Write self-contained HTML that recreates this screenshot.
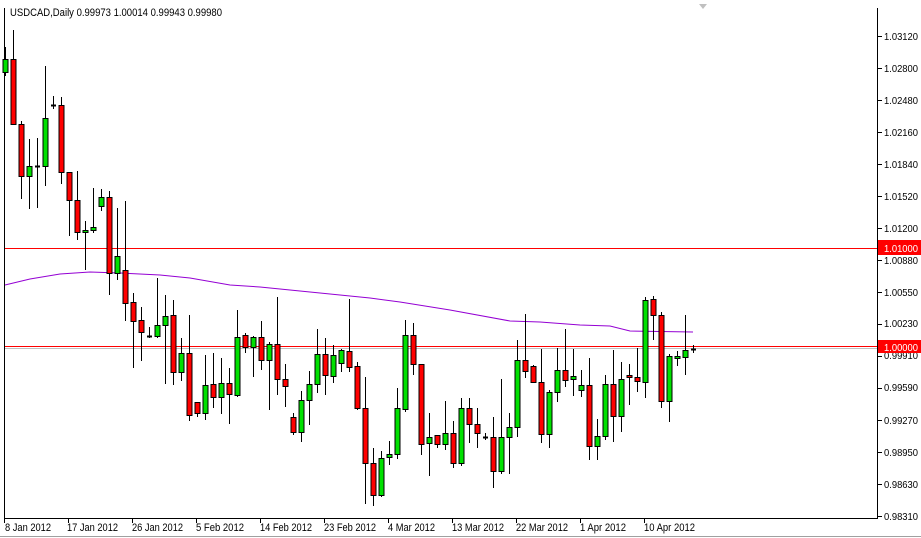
<!DOCTYPE html>
<html><head><meta charset="utf-8"><style>
html,body{margin:0;padding:0;background:#fff;width:921px;height:538px;overflow:hidden}
svg{display:block;font-family:"Liberation Sans",sans-serif;font-size:11px}
</style></head><body>
<svg id="c" width="921" height="538" xmlns="http://www.w3.org/2000/svg">
<rect x="0" y="0" width="921" height="538" fill="#fff"/>
<line x1="0" y1="536.5" x2="921" y2="536.5" stroke="#a0a0a0"/>
<line x1="4.5" y1="8" x2="4.5" y2="518" stroke="#000"/>
<line x1="877.5" y1="8" x2="877.5" y2="518" stroke="#000"/>
<line x1="4" y1="518.5" x2="878" y2="518.5" stroke="#000"/>
<polygon points="699,4 707,4 703,9" fill="#c0c0c0"/>
<line x1="5" y1="248.5" x2="877" y2="248.5" stroke="#ff0000"/>
<line x1="5" y1="348.5" x2="877" y2="348.5" stroke="#c0c0c0"/>
<line x1="5" y1="346.5" x2="877" y2="346.5" stroke="#ff0000"/>
<polyline fill="none" stroke="#9400d3" stroke-width="1" points="5,285 30,279 60,274 90,272 120,273 160,275 190,278 230,285 260,287 290,290 340,295 370,298 400,302 450,310 510,321 540,322 580,325 610,326 630,331 693,332"/>
<g id="cd"></g>
<text x="10" y="16" fill="#000" textLength="212" lengthAdjust="spacingAndGlyphs">USDCAD,Daily  0.99973 1.00014 0.99943 0.99980</text>
<g fill="#000" font-size="10.5">
<text x="884" y="40" textLength="34" lengthAdjust="spacingAndGlyphs">1.03120</text><text x="884" y="72" textLength="34" lengthAdjust="spacingAndGlyphs">1.02800</text>
<text x="884" y="104" textLength="34" lengthAdjust="spacingAndGlyphs">1.02480</text><text x="884" y="136" textLength="34" lengthAdjust="spacingAndGlyphs">1.02160</text>
<text x="884" y="168" textLength="34" lengthAdjust="spacingAndGlyphs">1.01840</text><text x="884" y="200" textLength="34" lengthAdjust="spacingAndGlyphs">1.01520</text>
<text x="884" y="232" textLength="34" lengthAdjust="spacingAndGlyphs">1.01200</text><text x="884" y="264" textLength="34" lengthAdjust="spacingAndGlyphs">1.00880</text>
<text x="884" y="296" textLength="34" lengthAdjust="spacingAndGlyphs">1.00550</text><text x="884" y="327" textLength="34" lengthAdjust="spacingAndGlyphs">1.00230</text>
<text x="884" y="359" textLength="34" lengthAdjust="spacingAndGlyphs">0.99910</text><text x="884" y="391" textLength="34" lengthAdjust="spacingAndGlyphs">0.99590</text>
<text x="884" y="424" textLength="34" lengthAdjust="spacingAndGlyphs">0.99270</text><text x="884" y="456" textLength="34" lengthAdjust="spacingAndGlyphs">0.98950</text>
<text x="884" y="488" textLength="34" lengthAdjust="spacingAndGlyphs">0.98630</text><text x="884" y="520" textLength="34" lengthAdjust="spacingAndGlyphs">0.98310</text>
</g>
<rect x="878" y="240" width="43" height="15" fill="#ff0000"/>
<text x="884" y="252" fill="#fff" font-size="10.5" textLength="34" lengthAdjust="spacingAndGlyphs">1.01000</text>
<rect x="878" y="340" width="43" height="13" fill="#ff0000"/>
<text x="884" y="351" fill="#fff" font-size="10.5" textLength="34" lengthAdjust="spacingAndGlyphs">1.00000</text>
<g id="tk" stroke="#000"></g>
<g fill="#000">
<text x="5" y="531" textLength="46" lengthAdjust="spacingAndGlyphs">8 Jan 2012</text><text x="67" y="531" textLength="51" lengthAdjust="spacingAndGlyphs">17 Jan 2012</text>
<text x="132" y="531" textLength="51" lengthAdjust="spacingAndGlyphs">26 Jan 2012</text><text x="196" y="531" textLength="48" lengthAdjust="spacingAndGlyphs">5 Feb 2012</text>
<text x="260" y="531" textLength="52" lengthAdjust="spacingAndGlyphs">14 Feb 2012</text><text x="324" y="531" textLength="52" lengthAdjust="spacingAndGlyphs">23 Feb 2012</text>
<text x="388" y="531" textLength="47" lengthAdjust="spacingAndGlyphs">4 Mar 2012</text><text x="452" y="531" textLength="52" lengthAdjust="spacingAndGlyphs">13 Mar 2012</text>
<text x="516" y="531" textLength="52" lengthAdjust="spacingAndGlyphs">22 Mar 2012</text><text x="580" y="531" textLength="46" lengthAdjust="spacingAndGlyphs">1 Apr 2012</text>
<text x="644" y="531" textLength="51" lengthAdjust="spacingAndGlyphs">10 Apr 2012</text>
</g>
</svg>
<script>
var d=[[72,47,76,59],[59,30,124,124],[124,121,199,176],[176,139,209,166],[166,138,208,166],[166,66,186,118],[105,96,109,105],[105,97,184,172],[172,172,236,200],[200,171,240,232],[232,221,270,230],[230,188,233,227],[206,189,211,197],[197,191,295,273],[273,208,280,256],[270,201,321,303],[302,293,368,321],[320,307,361,332],[336,327,338,336],[336,278,338,325],[325,295,384,316],[315,300,385,372],[372,338,381,353],[353,315,421,415],[402,402,417,413],[413,355,420,385],[384,353,408,397],[397,358,414,383],[383,368,424,394],[395,310,397,337],[335,333,353,347],[347,336,377,337],[337,321,370,360],[360,342,410,344],[344,297,395,379],[379,364,407,386],[417,413,435,432],[432,391,442,400],[400,371,425,384],[384,329,393,354],[354,338,395,375],[376,345,383,355],[363,349,372,350],[351,299,372,367],[366,362,410,408],[408,377,504,463],[463,448,506,495],[495,451,497,458],[457,441,465,454],[454,388,459,408],[409,320,412,335],[335,323,375,364],[364,364,455,444],[443,413,476,437],[435,435,448,444],[444,401,450,433],[433,421,468,463],[463,398,466,408],[408,398,443,424],[424,408,448,433],[437,433,440,437],[437,417,488,471],[471,379,474,437],[437,413,474,427],[427,340,437,360],[360,314,378,371],[366,365,383,382],[382,349,443,434],[434,390,448,392],[392,348,402,370],[370,329,387,380],[379,349,396,376],[390,370,397,385],[385,358,460,446],[446,419,460,436],[436,375,440,384],[384,350,442,416],[416,362,432,379],[375,364,405,377],[377,348,392,381],[382,297,398,300],[299,296,340,315],[315,312,408,401],[401,354,422,356],[358,351,366,356],[357,315,375,350],[349,345,353,349]];
var g=document.getElementById('cd'),s='';
d.forEach(function(c,i){var x=5+8*i,o=c[0],h=c[1],l=c[2],cl=c[3];
s+='<line x1="'+(x+.5)+'" y1="'+h+'" x2="'+(x+.5)+'" y2="'+l+'" stroke="#000"/>';
var t=Math.min(o,cl),b=Math.max(o,cl);
if(b-t<1){s+='<line x1="'+(x-2)+'" y1="'+(t+.5)+'" x2="'+(x+3)+'" y2="'+(t+.5)+'" stroke="#000" stroke-width="2"/>';}
else{var col=cl<o?'#00e000':'#ff0000';s+='<rect x="'+(x-2)+'" y="'+(t+.5)+'" width="5" height="'+(b-t)+'" fill="'+col+'" stroke="#000"/>';}
});
g.innerHTML=s;
var k='';for(var i=0;i<11;i++){var x=4.5+64*i;k+='<line x1="'+x+'" y1="518" x2="'+x+'" y2="523"/>';}
for(var j=0;j<16;j++){var y=36.5+32*j;k+='<line x1="878" y1="'+y+'" x2="882" y2="'+y+'"/>';}
document.getElementById('tk').innerHTML=k;
</script>
</body></html>
